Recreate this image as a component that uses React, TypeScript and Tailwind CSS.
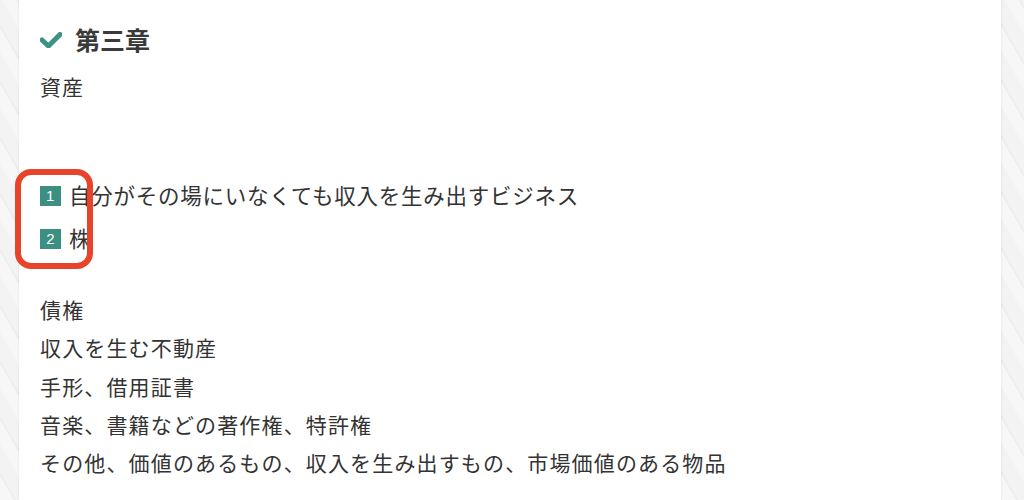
import React from "react";

const font = { fontFamily: '"Noto Sans CJK JP", "Noto Sans", sans-serif' };

function Badge({ n }: { n: number }) {
  return (
    <span
      className="inline-flex items-center justify-center w-[21px] h-[20px] bg-[#3c8f81] text-white text-[15px] leading-none mr-[8px] shrink-0"
      style={{ fontFamily: '"Liberation Sans", Arial, sans-serif' }}
    >
      {n}
    </span>
  );
}

export default function App() {
  const lines = [
    "債権",
    "収入を生む不動産",
    "手形、借用証書",
    "音楽、書籍などの著作権、特許権",
    "その他、価値のあるもの、収入を生み出すもの、市場価値のある物品",
  ];
  return (
    <div
      className="relative w-[1024px] h-[500px] overflow-hidden flex bg-[#f1f1f1] bg-[repeating-linear-gradient(60deg,#f7f7f7_0px,#f7f7f7_12px,#eeeeee_12px,#eeeeee_14px,#f3f3f3_14px,#f3f3f3_28px)]"
      style={font}
    >
      <div className="w-[19px] shrink-0" />
      <div className="w-[982px] shrink-0 bg-white shadow-[0_0_3px_rgba(0,0,0,0.08)] pl-[21px] pt-[20px] text-[#333333]">
        <h2 className="flex items-center h-[40px] text-[25px] font-semibold text-[#3a3a3a]">
          <svg width="22" height="16" viewBox="0 0 22 16" className="mr-[13px] shrink-0">
            <path d="M2 8 L8.5 14 L20 2.5" fill="none" stroke="#3c9284" strokeWidth="5" strokeLinecap="round" strokeLinejoin="miter" />
          </svg>
          <span>第三章</span>
        </h2>
        <p className="mt-[7px] text-[21px] leading-[38px] tracking-[1px]">資産</p>
        <div className="mt-[69px]">
          <div className="flex items-center h-[43px] text-[21.5px] tracking-[0.75px]">
            <Badge n={1} />
            <span>自分がその場にいなくても収入を生み出すビジネス</span>
          </div>
          <div className="flex items-center h-[43px] text-[21.5px]">
            <Badge n={2} />
            <span>株</span>
          </div>
        </div>
        <div className="mt-[30px] text-[21px]">
          {lines.map((l) => (
            <p key={l} className="leading-[38.25px] tracking-[1.15px]">
              {l}
            </p>
          ))}
        </div>
      </div>
      <div className="flex-1" />
      <div className="absolute left-[15px] top-[169px] w-[78px] h-[100px] border-[6px] border-[#e8432b] rounded-[16px]" />
    </div>
  );
}
